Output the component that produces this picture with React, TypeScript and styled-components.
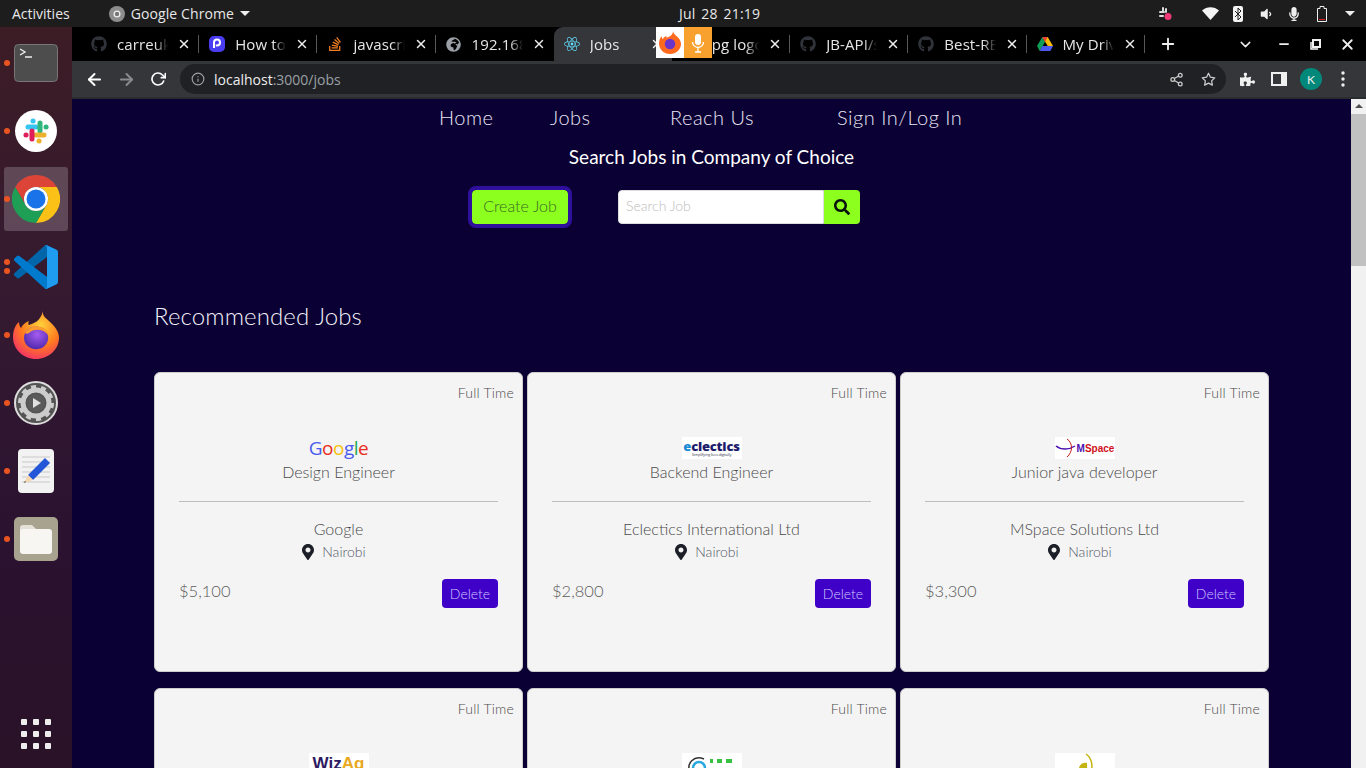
import React from "react";
import styled, { createGlobalStyle } from "styled-components";
import { FaGithub, FaStackOverflow, FaGlobeAfrica, FaReact, FaSearch, FaMapMarkerAlt, FaPuzzlePiece, FaVolumeDown, FaMicrophone } from "react-icons/fa";
import { FiArrowLeft, FiArrowRight, FiRotateCw, FiInfo, FiShare2, FiStar, FiPlus, FiX, FiChevronDown, FiMinus } from "react-icons/fi";

const Global = createGlobalStyle`
  html, body { margin: 0; padding: 0; height: 100%; overflow: hidden; background: #0a0033; }
  * { box-sizing: border-box; }
  #root { height: 768px; }
`;

const Desktop = styled.div`
  width: 1366px; height: 768px; display: grid; grid-template-rows: 27px 1fr; grid-template-columns: 72px 1fr;
  overflow: hidden; font-family: "Lato", "Liberation Sans", sans-serif;
`;
const TopBar = styled.header`
  grid-column: 1 / 3; background: #1d1d1d; color: #e8e8e8; font: 14px "Open Sans", "Liberation Sans", sans-serif;
  position: relative; display: flex; align-items: center; padding: 0 12px;
`;
const AppMenu = styled.div`display: flex; align-items: center; gap: 6px; margin-left: 39px; letter-spacing: 0.1px;`;
const Caret = styled.span`
  width: 0; height: 0; border-left: 5px solid transparent; border-right: 5px solid transparent; border-top: 5px solid #eee; margin-left: 0;
`;
const Clock = styled.div`position: absolute; left: 679px; top: 4px; letter-spacing: 0.2px; word-spacing: 2px;`;
const Tray = styled.div`margin-left: auto; display: flex; align-items: center; gap: 0; margin-right: -10px;`;
const TraySlot = styled.span<{ $w?: number }>`width: ${(p) => p.$w ?? 28}px; display: flex; justify-content: center; align-items: center; color: #eee;`;
const BluetoothPill = styled.span`width: 10px; height: 16px; border-radius: 2px; background: #f4f4f4; display: block;`;
const Dock = styled.nav`
  background: linear-gradient(180deg, #3c1c25 0%, #351a30 35%, #2a1230 70%, #2a1228 100%);
  display: flex; flex-direction: column; padding-top: 2px; padding-bottom: 19px; height: 741px;
`;
const DockItem = styled.div<{ $active?: boolean }>`
  height: 68px; width: 72px; position: relative; display: flex; align-items: center; justify-content: center;
  &::before { content: ""; position: absolute; left: 4px; right: 4px; top: 2px; bottom: 2px; border-radius: 3px;
    background: ${(p) => (p.$active ? "rgba(255,255,255,0.2)" : "transparent")}; }
  svg { position: relative; }
`;
const Pip = styled.i<{ $y?: number }>`
  position: absolute; left: 4px; top: ${(p) => p.$y ?? 31}px; width: 6px; height: 6px; border-radius: 50%; background: #e95420;
`;
const AppGrid = styled.div`
  margin-top: auto; align-self: center; display: grid; grid-template-columns: repeat(3, 6px); gap: 6px;
  i { width: 6px; height: 6px; background: #eee; border-radius: 1px; }
`;
const Browser = styled.main`display: grid; grid-template-rows: 34px 38px 1fr; min-width: 0; height: 741px; position: relative;`;
const TabStrip = styled.div`background: #000; display: flex; padding-left: 9px; align-items: stretch; color: #e6e6e6; position: relative;`;
const Tab = styled.div<{ $active?: boolean; $sep?: boolean }>`
  width: 118.2px; position: relative; display: flex; align-items: center; padding: 0 10px; gap: 10px; font: 15px "Open Sans", sans-serif; letter-spacing: 0.1px;
  background: ${(p) => (p.$active ? "#35363a" : "transparent")}; border-radius: ${(p) => (p.$active ? "9px 9px 0 0" : "0")};
  &::after { content: ""; position: absolute; right: 0; top: 8px; bottom: 8px; width: 1px; background: ${(p) => (p.$sep ? "#55575b" : "transparent")}; }
`;
const Fav = styled.span`width: 16px; height: 16px; flex: none; display: flex; align-items: center; justify-content: center;`;
const TabTitle = styled.span`
  flex: 1; min-width: 0; white-space: nowrap; overflow: hidden;
  -webkit-mask-image: linear-gradient(90deg, #000 75%, transparent 100%); mask-image: linear-gradient(90deg, #000 75%, transparent 100%);
`;
const TabClose = styled.span`flex: none; display: flex; color: #eee; margin-right: -2px; margin-left: -1px;`;
const StripButton = styled.span<{ $w: number; $gap?: number }>`width: ${(p) => p.$w}px; margin-left: ${(p) => p.$gap ?? 0}px; display: flex; align-items: center; justify-content: center; color: #eee; flex: none;`;
const MicOverlay = styled.div`
  position: absolute; left: 584px; top: 0; width: 56px; height: 31px; display: grid; grid-template-columns: 1fr 1fr; z-index: 2;
  span:first-child { background: #fff; display: flex; align-items: center; justify-content: center; }
  span:last-child { background: #f9a12e; color: #fff; display: flex; align-items: center; justify-content: center; }
`;
const Toolbar = styled.div`
  background: #35363a; display: flex; align-items: center; padding: 0 0 0 6px; border-bottom: 2px solid #2b2c2f; color: #eee;
`;
const NavBtn = styled.span<{ $dim?: boolean }>`width: 32px; display: flex; justify-content: center; color: ${(p) => (p.$dim ? "#8a8b8d" : "#fff")};`;
const Omnibox = styled.div`
  margin: 0 5px 0 6px; width: 1046px; height: 30px; border-radius: 15px; background: #202124; display: flex; align-items: center; padding: 0 2px 0 11px;
  gap: 9px; font: 14px "Open Sans", sans-serif; color: #9aa0a6; b { font-weight: 400; color: #eee; }
`;
const Url = styled.span`flex: 1;`;
const OmniAction = styled.span`width: 32px; margin-left: -9px; display: flex; justify-content: center; color: #ccc;`;
const ToolIcon = styled.span`width: 32px; display: flex; justify-content: center; color: #f0f0f0;`;
const Panel = styled.i`width: 16px; height: 14px; border: 2px solid #f0f0f0; border-right-width: 6px; display: block;`;
const Avatar = styled.span`width: 22px; height: 22px; border-radius: 50%; background: #00897b; color: #eee; font-size: 12px; display: flex; align-items: center; justify-content: center;`;
const Viewport = styled.div`display: grid; grid-template-columns: 1fr 15px; min-height: 0; overflow: hidden; height: 669px;`;
const Page = styled.div`background: #0a0033; color: #fff; overflow: hidden; min-width: 0;`;
const TopNav = styled.div`height: 35px; display: flex; align-items: center; color: #e9e6f5; font-size: 20px; font-weight: 300; padding-left: 367px; letter-spacing: 0.5px;`;
const NavLink = styled.a<{ $w: number }>`width: ${(p) => p.$w}px; flex: none; white-space: nowrap;`;
const Headline = styled.h1`
  margin: 0; text-align: center; font-size: 19px; line-height: 26px; font-weight: 400; padding-top: 10px; height: 56px;
`;
const SearchRow = styled.div`display: flex; align-items: center; height: 34px; padding-left: 400px;`;
const CreateButton = styled.button`
  width: 96px; height: 34px; background: #8cff1f; color: #3c6a24; border: 0; border-radius: 4px; outline: 4px solid #2e109c; font: 300 16px "Lato", sans-serif; padding: 0 0 3px;
`;
const SearchInput = styled.input`
  margin-left: 50px; width: 206px; height: 34px; border: 1px solid #ddd; border-radius: 4px 0 0 4px; padding: 0 7px 3px; font: 300 14px "Lato", sans-serif; background: #fff;
  &::placeholder { color: #bdbdbd; opacity: 1; }
`;
const SearchButton = styled.button`width: 36px; height: 34px; background: #8cff1f; border: 0; border-radius: 0 4px 4px 0; color: #08120a; display: flex; align-items: center; justify-content: center; padding: 0;`;
const SectionTitle = styled.h2`margin: 0; padding: 74px 0 0 82px; height: 148px; font-size: 24px; line-height: 36px; font-weight: 300; color: #f2f2f8; letter-spacing: 0.1px;`;
const CardGrid = styled.section`display: grid; grid-template-columns: repeat(3, 369px); column-gap: 4px; row-gap: 16px; padding-left: 82px;`;
const Card = styled.article`
  height: 300px; background: #f4f4f4; border: 1px solid #ccc; border-radius: 6px; padding: 0 24px; color: #4a4a4a; display: flex; flex-direction: column; font-weight: 300;
`;
const Kind = styled.div`font-size: 14px; line-height: 20px; padding-top: 10px; margin-right: -16px; text-align: right; height: 64px; color: #4a4a4a; letter-spacing: 0.2px;`;
const LogoBox = styled.div<{ $bg?: boolean }>`
  height: 22px; align-self: center; width: 60px; display: flex; align-items: center; justify-content: center; background: ${(p) => (p.$bg ? "#fff" : "transparent")};
  white-space: nowrap; overflow: visible;
`;
const GoogleLogo = styled.span`
  font: 500 19px "Open Sans", sans-serif; letter-spacing: -0.5px;
`;
const Letter = styled.span<{ $c: string }>`color: ${(p) => p.$c};`;
const Eclectics = styled.span`
  font: 800 13px/12px "Open Sans", sans-serif; color: #1d1b6b; letter-spacing: -0.2px; display: flex; flex-direction: column; align-items: center;
  em { font: 400 4px/5px "Open Sans", sans-serif; color: #445; }
`;
const MSpace = styled.span`
  font: 700 10px "Liberation Sans", sans-serif; display: flex; align-items: center; color: #d01020;
  b { color: #4b10b0; font-weight: 700; }
`;
const Wiz = styled.span`font: 700 17px/22px "Liberation Sans", sans-serif; color: #2d1a60; em { color: #e8a820; font-style: normal; }`;
const JobTitle = styled.div`text-align: center; font-size: 16px; line-height: 24px; margin-top: 1px;`;
const Rule = styled.hr`width: 100%; border: 0; border-top: 1px solid #bdbdbd; margin: 17px 0 0;`;
const Company = styled.div`text-align: center; font-size: 16px; line-height: 24px; margin-top: 15px;`;
const Place = styled.div`display: flex; justify-content: center; align-items: center; gap: 6px; font-size: 14px; line-height: 20px; margin-top: 1px; padding-right: 11px; color: #55596a; svg { color: #1c1f28; }`;
const CardFoot = styled.div`display: flex; justify-content: space-between; align-items: flex-start; margin-top: 17px;`;
const Price = styled.span`font-size: 16.5px; line-height: 24px; color: #5c5c5c;`;
const DeleteButton = styled.button`width: 56px; height: 29px; border: 0; border-radius: 4px; background: #3f00c8; color: #cfc8ff; font: 300 14px "Lato", sans-serif; padding: 0 0 1px;`;
const Scrollbar = styled.aside`
  background: #f1f1f1; display: flex; flex-direction: column; align-items: center; padding-top: 5px;
  i { width: 0; height: 0; border-left: 4px solid transparent; border-right: 4px solid transparent; border-bottom: 4px solid #505050; }
  b { display: block; width: 15px; height: 152px; margin-top: 6px; background: #c1c1c1; }
`;

const Gh = () => <FaGithub size={16} color="#30343a" />;
const HowTo = () => (<svg width="16" height="16" viewBox="0 0 16 16"><rect width="16" height="16" rx="5" fill="#4a3cf0" /><path d="M5 12V6.5a3 3 0 1 1 3 3H6.8" stroke="#fff" strokeWidth="2" fill="none" /></svg>);
const Drive = () => (<svg width="16" height="14" viewBox="0 0 16 14"><path d="M5.3 0h5.4l5.3 9h-5.3z" fill="#fbbc04" /><path d="M5.3 0 0 9l2.7 5 5.3-9z" fill="#0f9d58" /><path d="M2.7 14h10.6L16 9H5.3z" fill="#4a5af0" /><path d="M5.3 0h5.4L8 5z" fill="#ea4335" /></svg>);

const Terminal = () => (<svg width="44" height="38" viewBox="0 0 44 38"><rect x=".5" y=".5" width="43" height="37" rx="4" fill="#4d4d4d" stroke="#777" /><path d="M6 5l5 3-5 3M11 13h7" stroke="#eee" strokeWidth="1.4" fill="none" /></svg>);
const Slack = () => (<svg width="42" height="42" viewBox="0 0 42 42"><circle cx="21" cy="21" r="21" fill="#fff" /><g strokeWidth="5" strokeLinecap="round" fill="none"><path d="M13 17h8M18 11h.1" stroke="#36c5f0" /><path d="M25 13v8M31 17h.1" stroke="#2eb67d" /><path d="M29 25h-8M24 31h.1" stroke="#ecb22e" /><path d="M17 29v-8M11 25h.1" stroke="#e01e5a" /></g></svg>);
const Chrome = () => (<svg width="48" height="48" viewBox="0 0 48 48"><path d="M3.2 12A24 24 0 0 1 44.8 12H24A12 12 0 0 0 13.6 30Z" fill="#db4437" /><path d="M44.8 12H24A12 12 0 0 1 34.4 30L24 48A24 24 0 0 0 44.8 12Z" fill="#fbc116" /><path d="M3.2 12 13.6 30A12 12 0 0 0 34.4 30L24 48A24 24 0 0 1 3.2 12Z" fill="#1f9e55" /><circle cx="24" cy="24" r="12" fill="#fff" /><circle cx="24" cy="24" r="9.5" fill="#1a73e8" /></svg>);
const Code = () => (<svg width="44" height="44" viewBox="0 0 100 100"><path d="M96.46 10.8 75.86.87a6.23 6.23 0 0 0-7.1 1.21L1.35 63.55a4.17 4.17 0 0 0 0 6.16l5.51 5.01a4.17 4.17 0 0 0 5.32.24L93.4 13.4c2.72-2.07 6.64-.12 6.64 3.3v-.24a6.25 6.25 0 0 0-3.54-5.66z" fill="#0065a9" /><path d="M96.46 89.2 75.86 99.13a6.23 6.23 0 0 1-7.1-1.21L1.35 36.45a4.17 4.17 0 0 1 0-6.16l5.51-5.01a4.17 4.17 0 0 1 5.32-.24L93.4 86.6c2.72 2.07 6.64.12 6.64-3.3v.24a6.25 6.25 0 0 1-3.54 5.66z" fill="#007acc" /><path d="M75.86 99.13a6.23 6.23 0 0 1-7.1-1.21c2.3 2.3 6.25.67 6.25-2.59V4.67c0-3.26-3.95-4.89-6.25-2.59a6.23 6.23 0 0 1 7.1-1.21l20.6 9.91A6.25 6.25 0 0 1 100 16.42v67.17a6.25 6.25 0 0 1-3.54 5.63z" fill="#1f9cf0" /></svg>);
const Firefox = () => (<svg width="46" height="48" viewBox="0 0 46 48"><defs><radialGradient id="ff" cx=".6" cy=".3" r=".85"><stop offset="0" stopColor="#ffd23a" /><stop offset=".5" stopColor="#ff7a1f" /><stop offset="1" stopColor="#f01c7e" /></radialGradient><radialGradient id="fp" cx=".55" cy=".35" r=".7"><stop offset="0" stopColor="#a55cf0" /><stop offset="1" stopColor="#4a26a8" /></radialGradient></defs><path d="M30 0c-1 5 3 7 7 11 6 5 9 11 9 16 0 11-10 21-23 21S0 38 0 26c0-6 2-12 6-15 0 3 1 5 2 6 2-4 5-6 8-7-1 2-1 3 0 4 5-2 11-3 14-14z" fill="url(#ff)" /><path d="M11 27c0-8 8-13 15-11 7 1 10 7 9 13-2 7-8 10-14 9-6-1-10-6-10-11z" fill="url(#fp)" /><path d="M12 22c4-7 13-9 20-4 2 2 3 4 3 6-4-6-14-7-19-2-2 1-3 1-4 0z" fill="#ff9a2e" /></svg>);
const Settings = () => (<svg width="44" height="44" viewBox="0 0 44 44"><circle cx="22" cy="22" r="21" fill="#545454" stroke="#ddd" strokeWidth="2" /><circle cx="22" cy="22" r="13" fill="none" stroke="#ccc" strokeWidth="5" /><circle cx="22" cy="22" r="16" fill="none" stroke="#ccc" strokeWidth="4" strokeDasharray="5 5" /><circle cx="22" cy="22" r="9" fill="#5a5a5a" /><path d="M19 17l8 5-8 5z" fill="#e0e0e0" /></svg>);
const Notes = () => (<svg width="36" height="44" viewBox="0 0 36 44"><rect width="36" height="44" rx="4" fill="#f2f2f2" /><path d="M4 8h28M4 13h28M4 18h28M4 23h28M4 28h28M4 33h28" stroke="#c9c9c9" /><path d="M27 9l5 5-17 17-5-5z" fill="#2456d8" /><path d="M10 26l5 5-9 3z" fill="#f6d8b0" /><path d="M7 32l-1 2 2-1z" fill="#333" /></svg>);
const Files = () => (<svg width="44" height="44" viewBox="0 0 44 44"><rect width="44" height="44" rx="5" fill="#a8a38f" /><path d="M6 11a3 3 0 0 1 3-3h9l4 4v3H6z" fill="#e4e0d8" /><rect x="6" y="12" width="32" height="25" rx="3" fill="#f7f6f3" /></svg>);

const tabs = [
  { t: "carreukya", f: <Gh />, s: true },
  { t: "How to change", f: <HowTo />, s: true },
  { t: "javascript", f: <FaStackOverflow size={16} color="#f48024" />, s: true },
  { t: "192.168.1", f: <FaGlobeAfrica size={15} color="#9aa0a6" />, s: false },
  { t: "Jobs", f: <FaReact size={16} color="#61dafb" />, a: true, s: false },
  { t: "jpg logo", f: null, s: true },
  { t: "JB-API/src", f: <Gh />, s: true },
  { t: "Best-README", f: <Gh />, s: true },
  { t: "My Drive", f: <Drive />, s: true },
];

const G = () => (
  <GoogleLogo>
    <Letter $c="#4a5cf0">G</Letter><Letter $c="#ea2c20">o</Letter><Letter $c="#f4c20d">o</Letter><Letter $c="#4a5cf0">g</Letter><Letter $c="#1ca850">l</Letter><Letter $c="#ea2c20">e</Letter>
  </GoogleLogo>
);
const E = () => (<Eclectics><span><Letter $c="#1a8ad4">e</Letter>clectics</span><em>Simplifying lives digitally</em></Eclectics>);
const M = () => (<MSpace><svg width="22" height="20" viewBox="0 0 22 20"><path d="M1 8c5 4 13 4 19 0" stroke="#4b10b0" strokeWidth="1.500" fill="none" /><path d="M12 1c6 4 6 13 0 18" stroke="#c81818" strokeWidth="1" fill="none" /></svg><b>M</b>Space</MSpace>);
const W = () => (<Wiz>Wiz<em>Ag</em></Wiz>);
const J = () => (<svg width="60" height="22" viewBox="0 0 60 22"><path d="M8 20c-4-10 4-18 14-14" stroke="#333" strokeWidth="1.500" fill="none" /><circle cx="17" cy="15" r="6" fill="none" stroke="#29a8e0" strokeWidth="2.500" /><path d="M28 8h3M35 8h5M44 8h6" stroke="#38c040" strokeWidth="4" /></svg>);
const L = () => (<svg width="22" height="22" viewBox="0 0 22 22"><path d="M5 22c-2-8 2-13 8-12 0 4 1 8-2 12z" fill="#c4b414" /><path d="M12 1c7 5 7 14 4 21" stroke="#c4b414" strokeWidth="1.500" fill="none" /></svg>);

const jobs = [
  { logo: <G />, bg: false, title: "Design Engineer", co: "Google", price: "$5,100" },
  { logo: <E />, bg: true, title: "Backend Engineer", co: "Eclectics International Ltd", price: "$2,800" },
  { logo: <M />, bg: true, title: "Junior java developer", co: "MSpace Solutions Ltd", price: "$3,300" },
  { logo: <W />, bg: true, title: "Frontend Engineer", co: "WizAg", price: "$2,500" },
  { logo: <J />, bg: true, title: "Support Engineer", co: "Jobs Ltd", price: "$2,000" },
  { logo: <L />, bg: true, title: "Data Analyst", co: "Safari Ltd", price: "$2,400" },
];

export default function App() {
  return (
    <Desktop>
      <Global />
      <TopBar>
        Activities
        <AppMenu>
          <svg width="16" height="16" viewBox="0 0 16 16"><circle cx="8" cy="8" r="8" fill="#8d8d8d" /><circle cx="8" cy="8" r="3.500" fill="#eee" /><circle cx="8" cy="8" r="2.200" fill="#777" /></svg>
          Google Chrome
          <Caret />
        </AppMenu>
        <Clock>Jul 28 21:19</Clock>
        <Tray>
          <TraySlot><svg width="16" height="16" viewBox="0 0 16 16"><path d="M3 6h4M6 2v3M3 10h3M9 3v3" stroke="#ddd" strokeWidth="2" strokeLinecap="round" /><circle cx="11" cy="10.500" r="3.500" fill="#ee3a78" /></svg></TraySlot>
          <TraySlot $w={17} />
          <TraySlot><svg width="17" height="13" viewBox="0 0 17 13"><path d="M0 3.500C4.500-1 12.500-1 17 3.500L8.500 13z" fill="#f4f4f4" /></svg></TraySlot>
          <TraySlot><BluetoothPill><svg width="10" height="16" viewBox="0 0 10 16"><path d="M2 5l6 6-3 3V2l3 3-6 6" fill="none" stroke="#1d1d1d" /></svg></BluetoothPill></TraySlot>
          <TraySlot><FaVolumeDown size={14} /></TraySlot>
          <TraySlot><FaMicrophone size={14} /></TraySlot>
          <TraySlot><svg width="10" height="16" viewBox="0 0 10 16"><path d="M3 .5h4v2h2.500v13H.5v-13H3z" fill="none" stroke="#eee" /><path d="M2 13.500h6" stroke="#e02020" /></svg></TraySlot>
          <TraySlot><Caret /></TraySlot>
        </Tray>
      </TopBar>
      <Dock>
        <DockItem><Pip /><Terminal /></DockItem>
        <DockItem><Pip /><Slack /></DockItem>
        <DockItem $active><Pip /><Chrome /></DockItem>
        <DockItem><Pip $y={26} /><Pip $y={35} /><Code /></DockItem>
        <DockItem><Pip /><Firefox /></DockItem>
        <DockItem><Pip /><Settings /></DockItem>
        <DockItem><Pip /><Notes /></DockItem>
        <DockItem><Pip /><Files /></DockItem>
        <AppGrid>{Array.from({ length: 9 }, (_, i) => <i key={i} />)}</AppGrid>
      </Dock>
      <Browser>
        <TabStrip>
          {tabs.map((t) => (
            <Tab key={t.t} $active={t.a} $sep={t.s}>
              <Fav>{t.f}</Fav>
              <TabTitle>{t.t}</TabTitle>
              <TabClose><FiX size={14} strokeWidth={2.500} /></TabClose>
            </Tab>
          ))}
          <StripButton $w={46}><FiPlus size={18} strokeWidth={2.500} /></StripButton>
          <StripButton $w={56} $gap={27}><FiChevronDown size={17} /></StripButton>
          <StripButton $w={20}><FiMinus size={14} strokeWidth={3} /></StripButton>
          <StripButton $w={44}><svg width="11" height="11" viewBox="0 0 11 11"><path d="M3 1h7v7H3z" fill="none" stroke="#eee" strokeWidth="2" /><path d="M1 3v7h7" fill="none" stroke="#eee" strokeWidth="1.500" /></svg></StripButton>
          <StripButton $w={20}><FiX size={17} strokeWidth={2.500} /></StripButton>
          <MicOverlay>
            <span><svg width="22" height="23" viewBox="0 0 46 48"><path d="M30 0c-1 5 3 7 7 11 6 5 9 11 9 16 0 11-10 21-23 21S0 38 0 26c0-6 2-12 6-15 0 3 1 5 2 6 2-4 5-6 8-7-1 2-1 3 0 4 5-2 11-3 14-14z" fill="#ff6a1f" /><circle cx="23" cy="27" r="11" fill="#6b34c8" /></svg></span>
            <span><svg width="16" height="20" viewBox="0 0 16 20"><rect x="5" y="1" width="6" height="11" rx="3" fill="#fff" /><path d="M2.500 9a5.500 5.500 0 0 0 11 0M8 14.500V19M5 19h6" stroke="#fff" strokeWidth="1.300" fill="none" /></svg></span>
          </MicOverlay>
        </TabStrip>
        <Toolbar>
          <NavBtn><FiArrowLeft size={19} strokeWidth={2.500} /></NavBtn>
          <NavBtn $dim><FiArrowRight size={19} strokeWidth={2.500} /></NavBtn>
          <NavBtn><FiRotateCw size={16} strokeWidth={2.500} /></NavBtn>
          <Omnibox>
            <FiInfo size={14} />
            <Url><b>localhost</b>:3000/jobs</Url>
            <OmniAction><FiShare2 size={15} /></OmniAction>
            <OmniAction><FiStar size={15} /></OmniAction>
          </Omnibox>
          <ToolIcon><FaPuzzlePiece size={15} /></ToolIcon>
          <ToolIcon><Panel /></ToolIcon>
          <ToolIcon><Avatar>K</Avatar></ToolIcon>
          <ToolIcon><svg width="4" height="16" viewBox="0 0 4 16"><circle cx="2" cy="2" r="1.700" fill="#eee" /><circle cx="2" cy="8" r="1.700" fill="#eee" /><circle cx="2" cy="14" r="1.700" fill="#eee" /></svg></ToolIcon>
        </Toolbar>
        <Viewport>
          <Page>
            <TopNav>
              <NavLink $w={111}>Home</NavLink>
              <NavLink $w={120}>Jobs</NavLink>
              <NavLink $w={167}>Reach Us</NavLink>
              <NavLink $w={140}>Sign In/Log In</NavLink>
            </TopNav>
            <Headline>Search Jobs in Company of Choice</Headline>
            <SearchRow>
              <CreateButton>Create Job</CreateButton>
              <SearchInput placeholder="Search Job" />
              <SearchButton aria-label="Search"><FaSearch size={16} /></SearchButton>
            </SearchRow>
            <SectionTitle>Recommended Jobs</SectionTitle>
            <CardGrid>
              {jobs.map((j) => (
                <Card key={j.title}>
                  <Kind>Full Time</Kind>
                  <LogoBox $bg={j.bg}>{j.logo}</LogoBox>
                  <JobTitle>{j.title}</JobTitle>
                  <Rule />
                  <Company>{j.co}</Company>
                  <Place><FaMapMarkerAlt size={16} />Nairobi</Place>
                  <CardFoot>
                    <Price>{j.price}</Price>
                    <DeleteButton>Delete</DeleteButton>
                  </CardFoot>
                </Card>
              ))}
            </CardGrid>
          </Page>
          <Scrollbar><i /><b /></Scrollbar>
        </Viewport>
      </Browser>
    </Desktop>
  );
}
